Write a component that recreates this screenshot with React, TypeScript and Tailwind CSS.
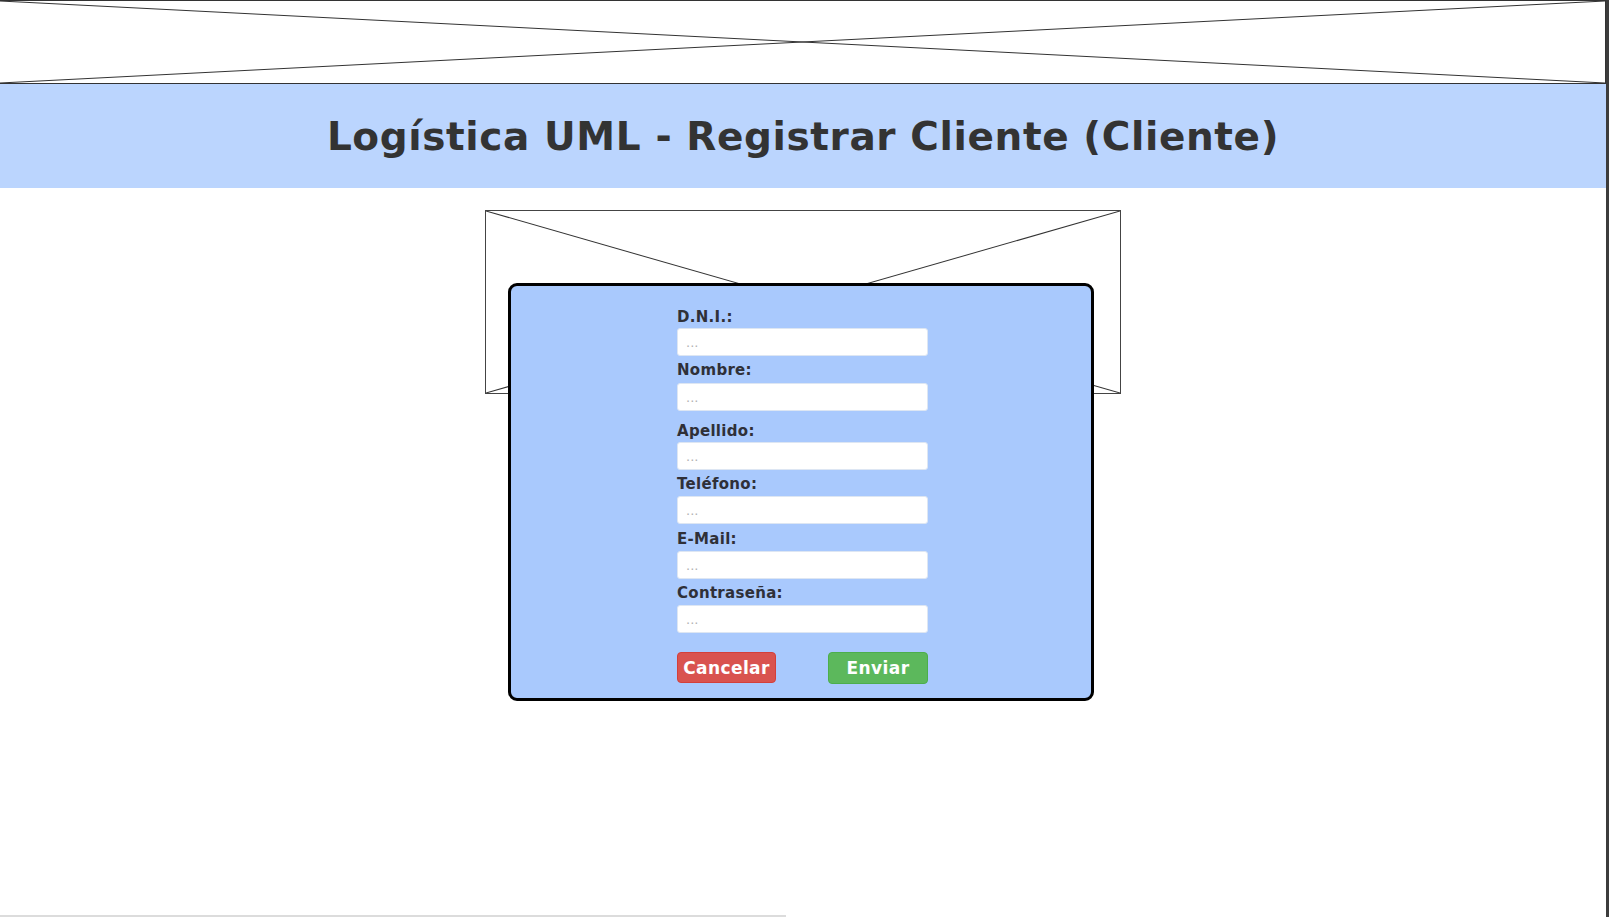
import React from "react";

const rows = [
  { label: "D.N.I.:", lm: "mt-[22px]", im: "mt-[2px]" },
  { label: "Nombre:", lm: "mt-[5px]", im: "mt-[4px]" },
  { label: "Apellido:", lm: "mt-[11px]", im: "mt-[2px]" },
  { label: "Teléfono:", lm: "mt-[5px]", im: "mt-[3px]" },
  { label: "E-Mail:", lm: "mt-[6px]", im: "mt-[3px]" },
  { label: "Contraseña:", lm: "mt-[5px]", im: "mt-[3px]" },
];

function Cross({ color = "#333" }: { color?: string }) {
  return (
    <svg
      className="block w-full h-full"
      viewBox="0 0 100 100"
      preserveAspectRatio="none"
    >
      <line x1="0" y1="0" x2="100" y2="100" stroke={color} strokeWidth="1" vectorEffect="non-scaling-stroke" />
      <line x1="0" y1="100" x2="100" y2="0" stroke={color} strokeWidth="1" vectorEffect="non-scaling-stroke" />
    </svg>
  );
}

export default function App() {
  return (
    <div
      className="w-[1609px] h-[917px] flex flex-row bg-white overflow-hidden"
      style={{ fontFamily: '"DejaVu Sans", Verdana, sans-serif' }}
    >
      <div className="w-[1606px] h-full flex flex-col">
        <div className="h-[84px] w-full border-t border-b border-r border-[#333]">
          <Cross />
        </div>
        <div className="h-[104px] w-full bg-[#bbd5fe] flex items-center justify-center">
          <h1 className="text-[39px] leading-[46px] font-bold text-[#333] tracking-[0.6px] pt-[2px]">
            Logística UML - Registrar Cliente (Cliente)
          </h1>
        </div>
        <div className="flex-1 flex flex-col items-center">
          <div className="mt-[22px] w-[636px] h-[184px] border border-[#444] bg-white">
            <Cross />
          </div>
          <div className="relative z-10 mt-[-111px] mr-[4px] w-[586px] h-[418px] border-[3px] border-black rounded-[9px] bg-[#a9c9fd] pl-[166px]">
            <div className="w-[251px] flex flex-col">
              {rows.map((r) => (
                <React.Fragment key={r.label}>
                  <label className={`${r.lm} block text-[15px] leading-[18px] font-bold text-[#2f3038] tracking-[0.3px]`}>
                    {r.label}
                  </label>
                  <input
                    readOnly
                    placeholder="..."
                    className={`${r.im} block w-[251px] h-[28px] rounded-[3px] bg-white border border-[#dde6f3] px-2 text-[13px] text-[#333] placeholder:text-[#b3b3b3] outline-none`}
                  />
                </React.Fragment>
              ))}
              <div className="mt-[19px] flex flex-row justify-between">
                <button className="w-[99px] h-[31px] rounded-[4px] bg-[#d9534f] border border-[#d43f3a] text-white font-bold text-[17px] leading-[20px] tracking-[0.4px]">
                  Cancelar
                </button>
                <button className="w-[100px] h-[32px] rounded-[4px] bg-[#5cb85c] border border-[#4cae4c] text-white font-bold text-[17px] leading-[20px] tracking-[0.4px]">
                  Enviar
                </button>
              </div>
            </div>
          </div>
        </div>
        <div className="h-[2px] w-[786px] bg-[#dcdcdc]" />
      </div>
      <div className="w-[3px] h-full bg-[#3c3c3c]" />
    </div>
  );
}
